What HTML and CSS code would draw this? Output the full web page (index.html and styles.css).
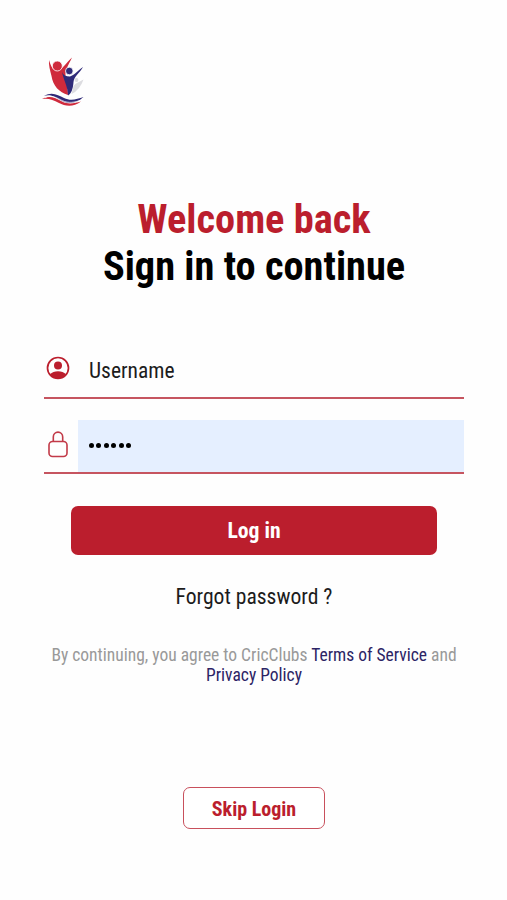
FILE: index.html
```html
<!DOCTYPE html>
<html lang="en">
<head>
    <meta charset="UTF-8">
    <meta name="viewport" content="width=device-width,initial-scale=1.0">
    <title>CricClubs Login</title>
    <link rel="stylesheet" href="styles.css">
</head>
<body>
    <div class="login">
        <svg class="logo" viewBox="0 0 42 50">
            <path d="M7 3C8.500 8 10 12 13.500 13.500C19 15 23 7 30 0.500C26.500 8 23.500 12 23.500 18C23.500 24 26 30 26 38C17 35 11 29 9.500 19C8 13 6.500 8 7 3Z" fill="#cf2a3c"/>
            <circle cx="15.300" cy="9" r="5" fill="#cf2a3c" stroke="#fff" stroke-width=".8"/>
            <path d="M20 15C21 18 24 19.500 28 19.500C34 17 36 13 41 10C38 16 32 19 31.500 25C31 31 30 36 26 38.500C26 30 21.500 23 20 15Z" fill="#2f2a78"/>
            <circle cx="27.300" cy="14" r="3.800" fill="#2f2a78" stroke="#fff" stroke-width=".8"/>
            <path d="M31.500 29Q33.500 26 36 25.500L41.500 22.500Q38 33 29.500 37Z" fill="#dcdce0"/>
            <circle cx="34.500" cy="23" r="1.900" fill="#dcdce0"/>
            <path d="M2 39C10 34 16 38 22 41C29 44.500 35 42 41.500 40C34 47 27 47 20 44C13 40 9 37 2 39Z" fill="#2f2a78"/>
            <path d="M0 42C8 38 13 41 20 44.500C27 48 33 46 39 44.500C31 50.500 23 49 17 46C11 43 7 41 0 42Z" fill="#cf2a3c"/>
            <path d="M3 40.600C10 37.500 15 41 20 43.500C27 46.800 33 45 38 43.500" fill="none" stroke="#fff" stroke-width=".7"/>
        </svg>
        <h1 class="title"><span class="red">Welcome back</span><br>Sign in to continue</h1>

        <form class="form">
            <div class="field">
                <svg class="user-icon" viewBox="0 0 24 24">
                    <circle cx="12" cy="12" r="10.500" fill="none" stroke="#bb1e2d" stroke-width="1.700"/>
                    <circle cx="12" cy="9.400" r="4" fill="#bb1e2d"/>
                    <path d="M4 18.200Q7 15.300 12 15.300T20 18.200Q16.500 22.500 12 22.500T4 18.200Z" fill="#bb1e2d"/>
                </svg>
                <input class="input" type="text" placeholder="Username">
            </div>
            <div class="field password">
                <svg class="lock-icon" viewBox="0 0 20 27" fill="none" stroke="#c23a48" stroke-width="1.600">
                    <rect x="1" y="10.500" width="18" height="15" rx="3.500"/>
                    <path d="M5.300 10.500V6a4.700 4.900 0 0 1 9.400 0v4.500"/>
                </svg>
                <div class="input filled">
                    <span class="dot"></span><span class="dot"></span><span class="dot"></span><span class="dot"></span><span class="dot"></span><span class="dot"></span>
                </div>
            </div>
            <button class="login-btn" type="button">Log in</button>
        </form>

        <a class="forgot">Forgot password ?</a>
        <p class="terms">By continuing, you agree to CricClubs <a>Terms of Service</a> and <a>Privacy Policy</a></p>
        <button class="skip-btn" type="button">Skip Login</button>
    </div>
</body>
</html>
```
FILE: styles.css
```css
* {
    box-sizing: border-box;
    margin: 0;
    padding: 0;
}
body {
    background-color: #fefefe;
    color: #000;
    font-family: "Roboto Condensed", Roboto, sans-serif;
    font-stretch: 75%;
}
.login {
    height: 900px;
    padding: 57px 43px 0 44px;
    display: flex;
    flex-direction: column;
    align-items: center;
}
.logo {
    align-self: flex-start;
    width: 42px;
    height: 50px;
    margin-left: -2px;
}
.title {
    margin-top: 89px;
    font-size: 40.4px;
    line-height: 47px;
    font-weight: 700;
    text-align: center;
    white-space: nowrap;
}
.red {
    color: #bb1e2d;
}
.form {
    width: 100%;
    margin-top: 55px;
    display: flex;
    flex-direction: column;
    align-items: center;
}
.field {
    width: 100%;
    height: 54px;
    display: flex;
    align-items: center;
    border-bottom: 2px solid #c65560;
}
.user-icon {
    width: 24px;
    height: 24px;
    margin: 0 10px 6px 2px;
}
.lock-icon {
    width: 20px;
    height: 27px;
    margin: 0 10px 4px 4px;
}
.input {
    flex: 1;
    min-width: 0;
    height: 100%;
    padding: 0 0 1px 9px;
    border: 0;
    background: transparent;
    font: inherit;
    font-size: 21.5px;
}
.input::placeholder {
    color: #1c1c1c;
    opacity: 1;
}
.password {
    margin-top: 21px;
}
.filled {
    display: flex;
    align-items: center;
    gap: 2.4px;
    padding-left: 11px;
    background-color: #e5efff;
}
.dot {
    width: 5px;
    height: 5px;
    border-radius: 50%;
    background-color: #000;
}
.login-btn {
    width: 366px;
    height: 49px;
    margin-top: 32px;
    border: 0;
    border-radius: 7px;
    background-color: #bb1e2d;
    color: #fff;
    font: inherit;
    font-size: 21.7px;
    font-weight: 700;
}
.forgot {
    margin-top: 29px;
    font-size: 21.6px;
    line-height: 25px;
    color: #1c1c1c;
}
.terms {
    margin-top: 36px;
    font-size: 17.5px;
    line-height: 20px;
    text-align: center;
    color: #999;
}
.terms a {
    color: #2c2465;
}
.skip-btn {
    width: 142px;
    height: 42px;
    margin-top: 102px;
    padding-top: 1px;
    border: 1.5px solid #c8505c;
    border-radius: 7px;
    background-color: #fff;
    color: #bb1e2d;
    font: inherit;
    font-size: 20px;
    font-weight: 700;
}
```
